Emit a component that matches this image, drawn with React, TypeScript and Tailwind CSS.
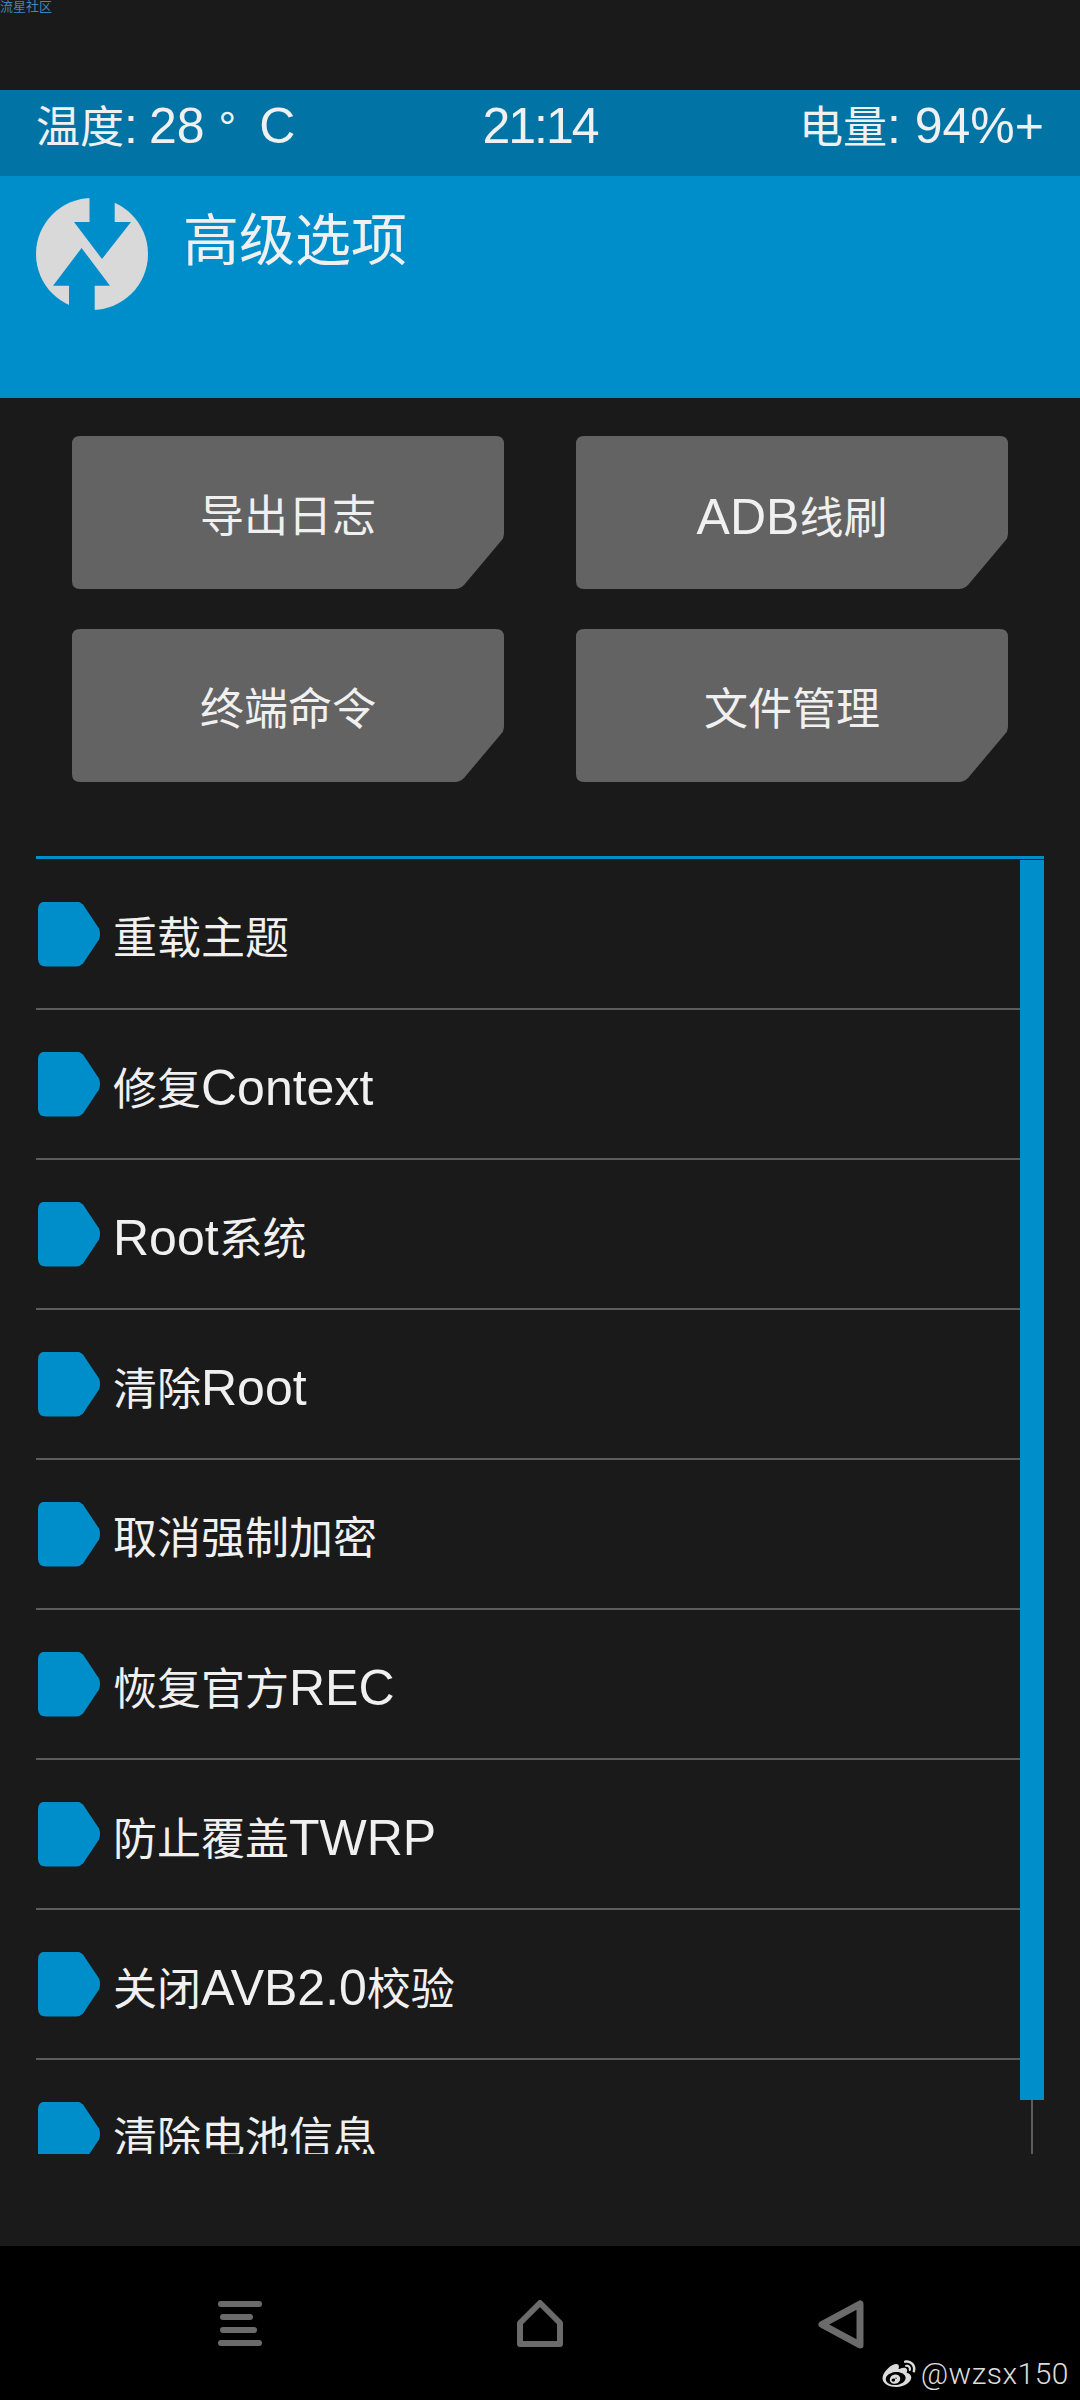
import { RiWeiboFill } from 'react-icons/ri';

const rows = [
  '重载主题',
  '修复Context',
  'Root系统',
  '清除Root',
  '取消强制加密',
  '恢复官方REC',
  '防止覆盖TWRP',
  '关闭AVB2.0校验',
  '清除电池信息',
];

const buttons = ['导出日志', 'ADB线刷', '终端命令', '文件管理'];

// latin runs are drawn larger than the cjk ones on this screen
function Label({ text }: { text: string }) {
  return (
    <>
      {text.split(/([\x00-\x7f]+)/).filter(Boolean).map((part, i) =>
        /^[\x00-\x7f]/.test(part) ? (
          <span key={i} className="text-[50px]">
            {part}
          </span>
        ) : (
          <span key={i}>{part}</span>
        ),
      )}
    </>
  );
}

function Logo() {
  return (
    <svg width="113" height="114" viewBox="0 0 113 114" className="shrink-0">
      <circle cx="56" cy="57" r="56" fill="#d9d9d9" />
      <polygon points="53.5,-5 78.7,-5 78.7,25 95,25 66,62 38,25 53.5,25" fill="#008ecb" />
      <polygon points="33,121 58.7,121 58.7,88.7 74,88.7 45.6,51 17,88.7 33,88.7" fill="#008ecb" />
    </svg>
  );
}

function MenuIcon() {
  return (
    <div className="flex w-[44px] flex-col gap-[7px]">
      <div className="h-[6px] w-[44px] rounded-full bg-[#6b6b6b]" />
      <div className="h-[6px] w-[33px] ml-[2px] rounded-full bg-[#6b6b6b]" />
      <div className="h-[6px] w-[37px] ml-[2px] rounded-full bg-[#6b6b6b]" />
      <div className="h-[6px] w-[44px] rounded-full bg-[#6b6b6b]" />
    </div>
  );
}

function HomeIcon() {
  return (
    <svg width="46" height="47" viewBox="0 0 46 47" fill="none" stroke="#6b6b6b" strokeWidth="6" strokeLinejoin="round">
      <path d="M3 44H43V23L23 3L3 23Z" />
    </svg>
  );
}

function BackIcon() {
  return (
    <svg width="46" height="49" viewBox="0 0 46 49" fill="none" stroke="#6b6b6b" strokeWidth="7" strokeLinejoin="round">
      <path d="M42 4V45L4 24.5Z" />
    </svg>
  );
}

export default function App() {
  return (
    <div
      className="flex h-[2400px] w-[1080px] flex-col overflow-hidden bg-[#1a1a1a] text-[44px] text-[#f0f0f0]"
      style={{ fontFamily: '"Liberation Sans", "Noto Sans CJK SC", sans-serif' }}
    >
      {/* top strip */}
      <div className="h-[90px] shrink-0">
        <p className="text-[13px] leading-[14px] text-[#3f86bd]">流星社区</p>
      </div>

      {/* status */}
      <div className="grid h-[86px] shrink-0 grid-cols-3 bg-[#0174a5] pl-[36px] pr-[36px] pt-[8px] leading-[56px] whitespace-pre">
        <div>
          <Label text="温度:" />
          <span className="ml-[11px]">
            <Label text="28" />
          </span>
          <span className="ml-[14px] text-[44px]">°</span>
          <span className="ml-[23px]">
            <Label text="C" />
          </span>
        </div>
        <div className="text-center tracking-[-2px]">
          <Label text="21:14" />
        </div>
        <div className="text-right">
          <Label text="电量: 94%+" />
        </div>
      </div>

      {/* title */}
      <div className="flex h-[222px] shrink-0 items-start gap-[34px] bg-[#008ecb] pl-[36px] pt-[21px]">
        <Logo />
        <h1 className="mt-[4px] text-[56px] leading-[80px] font-normal">高级选项</h1>
      </div>

      {/* actions */}
      <div className="grid shrink-0 grid-cols-[432px_432px] gap-x-[72px] gap-y-[40px] pl-[72px] pt-[38px]">
        {buttons.map((b) => (
          <div
            key={b}
            className="flex h-[153px] items-center justify-center bg-[#636363] [clip-path:path('M8_0H424Q432_0_432_8V97Q432_102_429_105L392_149Q388_153_383_153H8Q0_153_0_145V8Q0_0_8_0Z')]"
          >
            <span className="mt-[9px]">
              <Label text={b} />
            </span>
          </div>
        ))}
      </div>

      {/* list */}
      <div className="mx-[36px] mt-[74px] flex h-[1298px] shrink-0 flex-col">
        <div className="h-[3px] shrink-0 bg-[#008ecb]" />
        <div className="flex min-h-0 flex-1 pt-[1px]">
          <div className="flex-1 overflow-hidden">
            {rows.map((r) => (
              <div key={r} className="flex h-[150px] items-center gap-[12px] border-b-2 border-[#5c5c5c] pl-[2px]">
                <div className="h-[65px] w-[63px] shrink-0 bg-[#008ecb] [clip-path:path('M8_0H38Q42_0_45_3L61_27Q63_32_61_38L45_62Q42_65_38_65H8Q0_65_0_57V8Q0_0_8_0Z')]" />
                <span className="mt-[10px] leading-[60px]">
                  <Label text={r} />
                </span>
              </div>
            ))}
          </div>
          <div className="flex w-[24px] shrink-0 flex-col items-center">
            <div className="h-[1240px] w-full shrink-0 bg-[#008ecb]" />
            <div className="w-[2px] flex-1 bg-[#5c5c5c]" />
          </div>
        </div>
      </div>

      {/* nav */}
      <div className="relative mt-[92px] flex flex-1 justify-center bg-black pt-[54px]">
        <div className="flex w-[300px] justify-center">
          <div className="pt-[1px]">
            <MenuIcon />
          </div>
        </div>
        <div className="flex w-[300px] justify-center">
          <div>
            <HomeIcon />
          </div>
        </div>
        <div className="flex w-[300px] justify-center">
          <div className="pl-[1px]">
            <BackIcon />
          </div>
        </div>
        <div className="absolute bottom-[8px] right-[11px] flex items-center gap-[4px] text-[#dcdcdc]">
          <RiWeiboFill className="h-[36px] w-[36px]" />
          <span className="text-[30px] leading-[36px] tracking-[0.5px]" style={{ fontFamily: 'Roboto, sans-serif', fontWeight: 300 }}>
            @wzsx150
          </span>
        </div>
      </div>
    </div>
  );
}
